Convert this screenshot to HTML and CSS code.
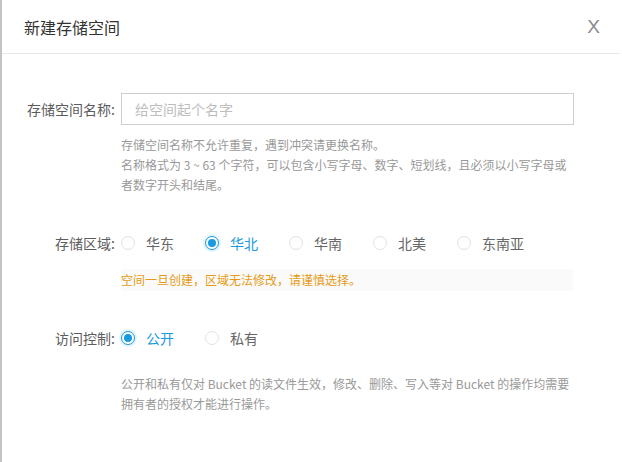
FILE: index.html
```html
<!DOCTYPE html>
<html lang="zh-CN">
<head>
<meta charset="utf-8">
<title>新建存储空间</title>
<link rel="stylesheet" href="styles.css">
</head>
<body>
<div class="modal">
  <div class="modal-header">
    <div class="modal-title">新建存储空间</div>
    <div class="modal-close">X</div>
  </div>
  <div class="modal-body">
    <div class="form-row">
      <div class="form-label">存储空间名称:</div>
      <div class="text-input"><span class="placeholder">给空间起个名字</span></div>
    </div>
    <div class="help help-name">
      存储空间名称不允许重复，遇到冲突请更换名称。<br>
      名称格式为 3 ~ 63 个字符，可以包含小写字母、数字、短划线，且必须以小写字母或者数字开头和结尾。
    </div>

    <div class="form-row row-region">
      <div class="form-label">存储区域:</div>
      <div class="radio-group">
        <div class="radio"><span class="radio-dot"></span><span class="radio-text">华东</span></div>
        <div class="radio checked"><span class="radio-dot"></span><span class="radio-text">华北</span></div>
        <div class="radio"><span class="radio-dot"></span><span class="radio-text">华南</span></div>
        <div class="radio"><span class="radio-dot"></span><span class="radio-text">北美</span></div>
        <div class="radio"><span class="radio-dot"></span><span class="radio-text">东南亚</span></div>
      </div>
    </div>
    <div class="warning">空间一旦创建，区域无法修改，请谨慎选择。</div>

    <div class="form-row row-access">
      <div class="form-label">访问控制:</div>
      <div class="radio-group">
        <div class="radio checked"><span class="radio-dot"></span><span class="radio-text">公开</span></div>
        <div class="radio"><span class="radio-dot"></span><span class="radio-text">私有</span></div>
      </div>
    </div>
    <div class="help help-access">
      公开和私有仅对 Bucket 的读文件生效，修改、删除、写入等对 Bucket 的操作均需要拥有者的授权才能进行操作。
    </div>
  </div>
</div>
</body>
</html>
```

FILE: styles.css
```css
html, body {
  margin: 0;
  padding: 0;
  background: #ffffff;
}

body {
  font-family: "Noto Sans CJK SC", "Noto Sans", sans-serif;
  color: #555;
}

.modal {
  width: 620px;
  height: 462px;
  border-left: 2px solid #c4c4c4;
  background: #fff;
  box-sizing: border-box;
}

.modal-header {
  height: 53px;
  border-bottom: 1px solid #e8e8e8;
  display: flex;
  align-items: center;
  justify-content: space-between;
  padding: 0 20px 0 22px;
}

.modal-title {
  font-size: 16px;
  color: #333;
  line-height: 20px;
}

.modal-close {
  font-family: "Liberation Sans", sans-serif;
  font-size: 19px;
  color: #8a8a8a;
  line-height: 20px;
}

.modal-body {
  padding: 39px 0 0 22px;
}

.form-row {
  display: flex;
  align-items: center;
}

.form-label {
  width: 97px;
  padding-right: 6px;
  box-sizing: border-box;
  text-align: right;
  font-size: 14px;
  color: #5c5c5c;
  white-space: nowrap;
}

.text-input {
  width: 453px;
  height: 32px;
  box-sizing: border-box;
  border: 1px solid #cfcfcf;
  display: flex;
  align-items: center;
  padding-left: 13px;
}

.placeholder {
  font-size: 14px;
  color: #bdbdbd;
}

.help {
  margin-left: 97px;
  width: 452px;
  font-size: 12px;
  line-height: 20px;
  color: #999;
}

.help-name {
  margin-top: 10px;
}

.row-region {
  margin-top: 38px;
  height: 20px;
}

.radio-group {
  display: flex;
  align-items: center;
}

.radio {
  display: flex;
  align-items: center;
  margin-right: 31px;
}

.radio-dot {
  width: 14px;
  height: 14px;
  box-sizing: border-box;
  border: 1px solid #e3e3e3;
  border-radius: 50%;
  display: flex;
  align-items: center;
  justify-content: center;
  background: #fff;
}

.radio.checked .radio-dot {
  border-color: #1b9ae0;
  box-shadow: 0 0 0 2px rgba(27, 154, 224, 0.12);
}

.radio.checked .radio-dot::after {
  content: "";
  width: 8px;
  height: 8px;
  border-radius: 50%;
  background: #1b9ae0;
}

.radio-text {
  margin-left: 11px;
  font-size: 14px;
  color: #666;
  line-height: 20px;
}

.radio.checked .radio-text {
  color: #1b9ae0;
}

.warning {
  margin: 16px 0 0 97px;
  width: 452px;
  height: 22px;
  line-height: 22px;
  background: #fafafa;
  font-size: 12px;
  color: #e69a16;
}

.row-access {
  margin-top: 37px;
  height: 20px;
}

.help-access {
  margin-top: 26px;
}
```
